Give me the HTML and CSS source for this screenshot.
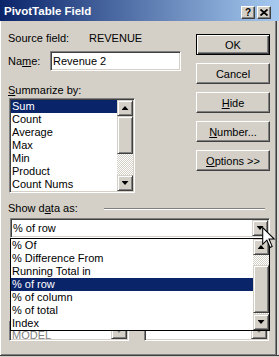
FILE: index.html
```html
<!DOCTYPE html>
<html>
<head>
<meta charset="utf-8">
<link rel="stylesheet" href="styles.css">
</head>
<body>
<div class="dialog">
  <div class="titlebar">
    <span class="title">PivotTable Field</span>
    <div class="capbtns">
      <span class="capbtn help">?</span>
      <span class="capbtn close"><svg width="8" height="7" viewBox="0 0 8 7"><path d="M0.5 0.5 L7.5 6.5 M7.5 0.5 L0.5 6.5" stroke="#000" stroke-width="1.8" fill="none"/></svg></span>
    </div>
  </div>
  <div class="body">
    <div class="top">
      <div class="left">
        <div class="source"><span>Source field:</span><span>REVENUE</span></div>
        <div class="name"><span class="name-label">Na<u>m</u>e:</span><div class="field input">Revenue 2</div></div>
        <div class="label"><u>S</u>ummarize by:</div>
        <div class="field listbox">
          <ul class="items">
            <li class="sel">Sum</li>
            <li>Count</li>
            <li>Average</li>
            <li>Max</li>
            <li>Min</li>
            <li>Product</li>
            <li>Count Nums</li>
          </ul>
          <div class="vscroll">
            <span class="sbtn up"></span>
            <span class="thumb t1"></span>
            <span class="track tr1"></span>
            <span class="sbtn down"></span>
          </div>
        </div>
      </div>
      <div class="buttons">
        <span class="btn default">OK</span>
        <span class="btn">Cancel</span>
        <span class="btn"><u>H</u>ide</span>
        <span class="btn"><u>N</u>umber...</span>
        <span class="btn"><u>O</u>ptions &gt;&gt;</span>
      </div>
    </div>
    <div class="showdata">
      <div class="group"><span>Show d<u>a</u>ta as:</span><span class="etch"></span></div>
      <div class="field combo main-combo"><span class="ctext">% of row</span><span class="sbtn down"></span></div>
      <div class="under">
        <div class="field combo dis c-left"><span class="ctext low">MODEL</span><span class="sbtn down disabled"></span></div>
        <div class="field combo dis c-right"><span class="ctext"></span><span class="sbtn down disabled"></span></div>
      </div>
      <div class="dropdown">
        <ul class="items">
          <li>% Of</li>
          <li>% Difference From</li>
          <li>Running Total in</li>
          <li class="sel">% of row</li>
          <li>% of column</li>
          <li>% of total</li>
          <li>Index</li>
        </ul>
        <div class="vscroll">
          <span class="sbtn up"></span>
          <span class="track tr2"></span>
          <span class="thumb t2"></span>
          <span class="track tr3"></span>
          <span class="sbtn down"></span>
        </div>
      </div>
    </div>
  </div>
  <svg class="cursor" width="14" height="22" viewBox="-0.5 -0.5 13 21"><path d="M0 0 L0 16 L4 12 L7 19 L9 18 L6 11 L11 11 Z" fill="#fff" stroke="#000" stroke-width="1" stroke-linejoin="miter"/></svg>
</div>
</body>
</html>
```
FILE: styles.css
```css
* { box-sizing: border-box; margin: 0; padding: 0; }
html, body { background: #d4d0c8; }
body {
  margin: 0;
  width: 279px;
  height: 357px;
  overflow: hidden;
  font-family: "Liberation Sans", Arial, sans-serif;
  font-size: 11px;
  color: #000;
}
.dialog {
  position: relative;
  width: 279px;
  height: 356px;
  background: #d4d0c8;
  border-bottom: 1px solid #404040;
  box-shadow: inset 0 -1px #808080;
}
.titlebar {
  height: 21px;
  display: flex;
  justify-content: space-between;
  align-items: center;
  padding: 0 8px 0 4px;
  background: linear-gradient(90deg, #0a246a 0%, #a6caf0 100%);
}
.title {
  color: #fff;
  font-weight: bold;
  font-size: 11.5px;
}
.capbtns {
  display: flex;
  gap: 2px;
  align-self: flex-start;
  margin-top: 6px;
}
.capbtn {
  width: 14px;
  height: 13px;
  background: #d4d0c8;
  border: 1px solid;
  border-color: #fff #404040 #404040 #fff;
  box-shadow: inset -1px -1px #808080;
  display: flex;
  align-items: center;
  justify-content: center;
  font-weight: bold;
  font-size: 10px;
  line-height: 1;
}
.body {
  height: 334px;
  padding: 0 7px 0 8px;
  border-right: 2px solid #dedcd6;
  box-shadow: inset 1px 0 #fff, inset -1px 0 #404040, inset -2px 0 #808080;
}
.top {
  display: flex;
  justify-content: space-between;
}
.left { width: 173px; }
.source {
  margin-top: 11px;
  display: grid;
  grid-template-columns: 81px auto;
  line-height: 13px;
}
.name {
  margin-top: 6px;
  display: flex;
  align-items: center;
  height: 20px;
}
.name-label { width: 42px; }
.field {
  background: #fff;
  border: 1px solid;
  border-color: #808080 #fff #fff #808080;
  box-shadow: inset 1px 1px #404040, inset -1px -1px #d4d0c8;
}
.input {
  width: 131px;
  height: 20px;
  padding-left: 2px;
  line-height: 18px;
}
.label {
  margin-top: 13px;
  line-height: 13px;
}
.listbox {
  margin: 1px 0 0 1px;
  width: 126px;
  height: 95px;
  padding: 1px;
  display: flex;
}
.items {
  flex: 1;
  list-style: none;
}
.items li {
  height: 13px;
  line-height: 13px;
  padding-left: 1px;
  white-space: nowrap;
}
.items li.sel {
  background: #0a246a;
  color: #fff;
}
.vscroll {
  width: 16px;
  display: flex;
  flex-direction: column;
}
.sbtn, .thumb {
  width: 16px;
  height: 16px;
  flex: none;
  background: #d4d0c8;
  border: 1px solid;
  border-color: #d4d0c8 #404040 #404040 #d4d0c8;
  box-shadow: inset 1px 1px #fff, inset -1px -1px #808080;
  display: flex;
  align-items: center;
  justify-content: center;
}
.sbtn::after {
  content: "";
  width: 7px;
  height: 4px;
  background: #000;
}
.sbtn.up::after { clip-path: polygon(50% 0, 100% 100%, 0 100%); }
.sbtn.down::after { clip-path: polygon(0 0, 100% 0, 50% 100%); }
.sbtn.disabled::after { background: #808080; }
.track {
  flex: none;
  background: repeating-conic-gradient(#fff 0 25%, #d4d0c8 0 50%) 0 0 / 2px 2px;
}
.t1 { height: 38px; }
.tr1 { height: 21px; }
.tr2 { height: 10px; }
.t2 { height: 48px; }
.tr3 { height: 1px; }
.buttons {
  margin-top: 13px;
  width: 74px;
  display: flex;
  flex-direction: column;
  gap: 8px;
}
.btn {
  height: 21px;
  display: flex;
  align-items: center;
  justify-content: center;
  border: 1px solid;
  border-color: #fff #404040 #404040 #fff;
  box-shadow: inset -1px -1px #808080;
}
.btn.default {
  border-color: #000;
  box-shadow: inset 1px 1px #fff, inset -1px -1px #404040, inset -2px -2px #808080;
}
.showdata {
  position: relative;
  margin-top: 9px;
}
.group {
  display: flex;
  align-items: center;
  height: 13px;
  line-height: 13px;
}
.etch {
  flex: 1;
  height: 2px;
  border-top: 1px solid #808080;
  border-bottom: 1px solid #fff;
  margin: 0 5px 0 26px;
}
.combo {
  height: 20px;
  padding: 1px;
  display: flex;
  align-items: center;
}
.main-combo {
  margin: 3px 0 0 2px;
  width: 260px;
}
.ctext {
  flex: 1;
  padding-left: 1px;
  white-space: nowrap;
}
.ctext.low {
  align-self: flex-start;
  padding-top: 7px;
  line-height: 10px;
}
.under {
  margin-top: 83px;
  display: flex;
}
.dis .ctext { color: #808080; }
.c-left { margin-left: 1px; width: 120px; }
.c-right { margin-left: 15px; width: 125px; }
.dropdown {
  position: absolute;
  left: 2px;
  top: 36px;
  width: 260px;
  height: 93px;
  border: 1px solid #000;
  background: #fff;
  display: flex;
}
.cursor {
  position: absolute;
  left: 262px;
  top: 227px;
}
```
